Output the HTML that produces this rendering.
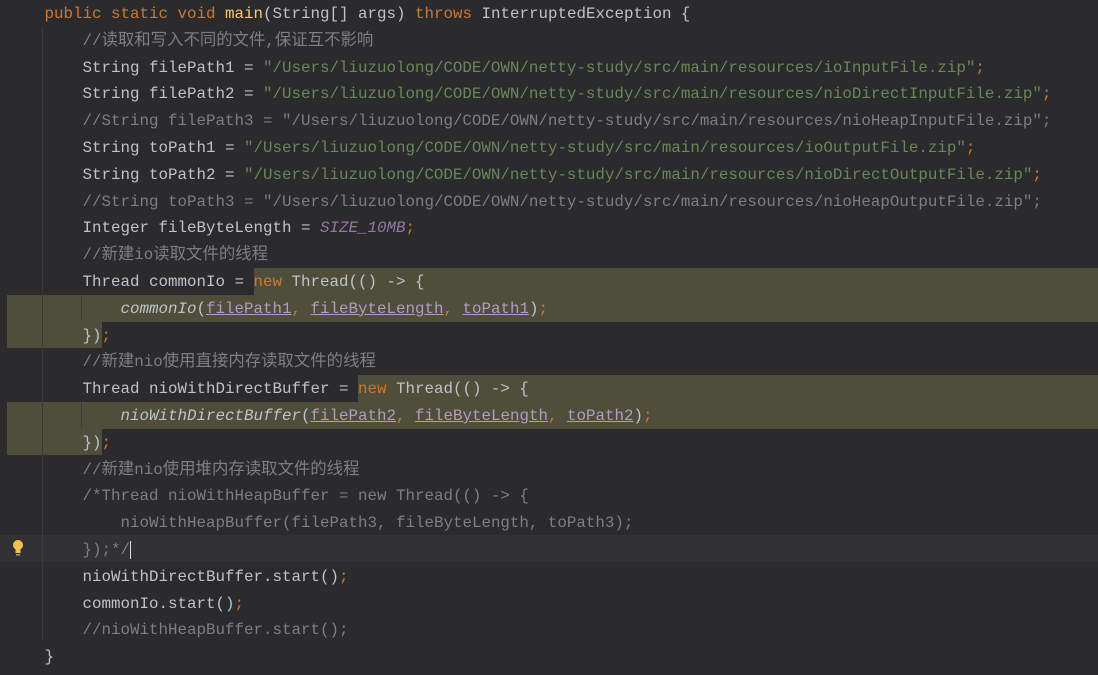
<!DOCTYPE html>
<html><head><meta charset="utf-8"><style>
html,body{margin:0;padding:0;background:#2b2b2d;width:1098px;height:675px;overflow:hidden}
.l{position:absolute;left:44.5px;height:26.8px;line-height:26.8px;font-family:"Liberation Mono","Noto Sans CJK SC",monospace;font-size:15.83px;color:#bcc3cc;white-space:pre}
.c{color:#7d7f83}.k{color:#cc7832}.m{color:#ffc66d}.s{color:#6a8759}.p{color:#9876aa}
.i{font-style:italic}.u{text-decoration:underline;color:#b39bc6}
.z{font-size:16.4px}
.hl{position:absolute;background:#4e4e3a}
.cur{position:absolute;left:0;right:0;background:#323234}
.g{position:absolute;width:1px;background:#3a3a3c}
</style></head><body>
<div class="cur" style="top:535px;height:27px"></div>
<div class="hl" style="left:254px;top:268px;right:0;height:27px"></div>
<div class="hl" style="left:7px;top:295px;right:0;height:26.5px"></div>
<div class="hl" style="left:7px;top:321px;width:95px;height:27px"></div>
<div class="hl" style="left:358px;top:375px;right:0;height:27px"></div>
<div class="hl" style="left:7px;top:402px;right:0;height:26.5px"></div>
<div class="hl" style="left:7px;top:428px;width:95px;height:27px"></div>
<div class="g" style="left:42px;top:27px;height:614px"></div>
<div class="g" style="left:81px;top:295px;height:26px"></div>
<div class="g" style="left:81px;top:402px;height:26px"></div>
<svg style="position:absolute;left:11px;top:539px" width="14" height="18" viewBox="0 0 14 18"><circle cx="7" cy="6" r="5" fill="#f2c14e"/><rect x="4.5" y="10" width="5" height="4" fill="#f2c14e"/><rect x="5" y="15" width="4" height="1.5" fill="#999"/></svg>
<div class="l" style="top:1px"><span class="k">public static void </span><span class="m">main</span>(String[] args) <span class="k">throws </span>InterruptedException {</div>
<div class="l" style="top:27.8px">    <span class="c">//<span class="z">读取和写入不同的文件</span>,<span class="z">保证互不影响</span></span></div>
<div class="l" style="top:54.6px">    String filePath1 = <span class="s">"/Users/liuzuolong/CODE/OWN/netty-study/src/main/resources/ioInputFile.zip"</span><span class="k">;</span></div>
<div class="l" style="top:81.4px">    String filePath2 = <span class="s">"/Users/liuzuolong/CODE/OWN/netty-study/src/main/resources/nioDirectInputFile.zip"</span><span class="k">;</span></div>
<div class="l" style="top:108.2px">    <span class="c">//String filePath3 = "/Users/liuzuolong/CODE/OWN/netty-study/src/main/resources/nioHeapInputFile.zip";</span></div>
<div class="l" style="top:135px">    String toPath1 = <span class="s">"/Users/liuzuolong/CODE/OWN/netty-study/src/main/resources/ioOutputFile.zip"</span><span class="k">;</span></div>
<div class="l" style="top:161.8px">    String toPath2 = <span class="s">"/Users/liuzuolong/CODE/OWN/netty-study/src/main/resources/nioDirectOutputFile.zip"</span><span class="k">;</span></div>
<div class="l" style="top:188.6px">    <span class="c">//String toPath3 = "/Users/liuzuolong/CODE/OWN/netty-study/src/main/resources/nioHeapOutputFile.zip";</span></div>
<div class="l" style="top:215.4px">    Integer fileByteLength = <span class="p i">SIZE_10MB</span><span class="k">;</span></div>
<div class="l" style="top:242.2px">    <span class="c">//<span class="z">新建</span>io<span class="z">读取文件的线程</span></span></div>
<div class="l" style="top:269px">    Thread commonIo = <span class="k">new </span>Thread(() -&gt; {</div>
<div class="l" style="top:295.8px">        <span class="i">commonIo</span>(<span class="u">filePath1</span><span class="k">, </span><span class="u">fileByteLength</span><span class="k">, </span><span class="u">toPath1</span>)<span class="k">;</span></div>
<div class="l" style="top:322.6px">    })<span class="k">;</span></div>
<div class="l" style="top:349.4px">    <span class="c">//<span class="z">新建</span>nio<span class="z">使用直接内存读取文件的线程</span></span></div>
<div class="l" style="top:376.2px">    Thread nioWithDirectBuffer = <span class="k">new </span>Thread(() -&gt; {</div>
<div class="l" style="top:403px">        <span class="i">nioWithDirectBuffer</span>(<span class="u">filePath2</span><span class="k">, </span><span class="u">fileByteLength</span><span class="k">, </span><span class="u">toPath2</span>)<span class="k">;</span></div>
<div class="l" style="top:429.8px">    })<span class="k">;</span></div>
<div class="l" style="top:456.6px">    <span class="c">//<span class="z">新建</span>nio<span class="z">使用堆内存读取文件的线程</span></span></div>
<div class="l" style="top:483.4px">    <span class="c">/*Thread nioWithHeapBuffer = new Thread(() -&gt; {</span></div>
<div class="l" style="top:510.2px">        <span class="c">nioWithHeapBuffer(filePath3, fileByteLength, toPath3);</span></div>
<div class="l" style="top:537px">    <span class="c">});*/</span><span style="border-left:1.5px solid #ddd"> </span></div>
<div class="l" style="top:563.8px">    nioWithDirectBuffer.start()<span class="k">;</span></div>
<div class="l" style="top:590.6px">    commonIo.start()<span class="k">;</span></div>
<div class="l" style="top:617.4px">    <span class="c">//nioWithHeapBuffer.start();</span></div>
<div class="l" style="top:644.2px">}</div>
</body></html>
